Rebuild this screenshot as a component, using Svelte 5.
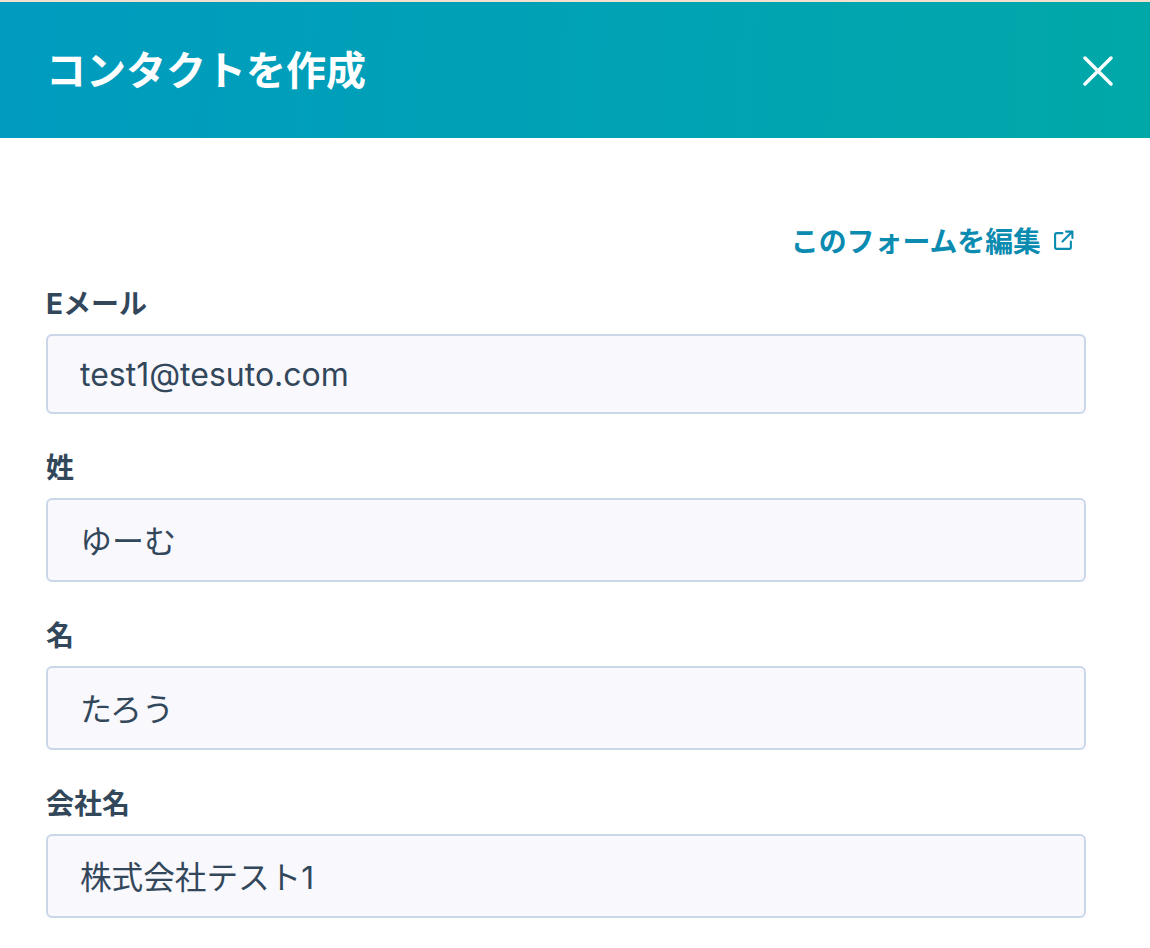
<script>
  const fields = [
    { label: 'Eメール', value: 'test1@tesuto.com', height: 80, size: 'large' },
    { label: '姓', value: 'ゆーむ', height: 84, size: 'large' },
    { label: '名', value: 'たろう', height: 84, size: 'large' },
    { label: '会社名', value: '株式会社テスト1', height: 84, size: 'normal' }
  ];
</script>

<div class="panel">
  <header class="head">
    <h1>コンタクトを作成</h1>
    <button class="close" aria-label="閉じる">
      <svg width="30" height="30" viewBox="0 0 30 30" fill="none" stroke="#fff" stroke-width="3.4" stroke-linecap="round">
        <path d="M2 2 L28 28 M28 2 L2 28" />
      </svg>
    </button>
  </header>
  <div class="body">
    <div class="edit">
      <span class="edit-text">このフォームを編集</span>
      <svg width="21" height="21" viewBox="0 0 20 20" fill="none" stroke="#0b8bb0" stroke-width="2" stroke-linecap="round" stroke-linejoin="round">
        <path d="M9 3 H3.5 A1.5 1.5 0 0 0 2 4.5 V16.5 A1.5 1.5 0 0 0 3.5 18 H15.5 A1.5 1.5 0 0 0 17 16.5 V11" />
        <path d="M9 11 L18.5 1.5 M12.5 1.5 H18.5 V7.5" />
      </svg>
    </div>
    {#each fields as f}
      <div class="field">
        <label for={f.label}>{f.label}</label>
        <input id={f.label} class={f.size} value={f.value} style="height:{f.height}px" readonly />
      </div>
    {/each}
  </div>
</div>

<style>
  :global(body) {
    margin: 0;
    background: #fff;
  }
  .panel {
    width: 1150px;
    height: 948px;
    overflow: hidden;
    background: #fff;
    border-top: 2px solid #f5dfcf;
    box-sizing: border-box;
    font-family: Inter, "Noto Sans CJK JP", sans-serif;
    color: #33475b;
  }
  .head {
    height: 136px;
    box-sizing: border-box;
    padding: 0 37px 0 46px;
    display: flex;
    align-items: center;
    justify-content: space-between;
    background: linear-gradient(93deg, #009bbf 0%, #00a3b3 60%, #00a8a8 100%);
  }
  h1 {
    margin: 0 0 -2px;
    font-size: 40px;
    font-weight: 700;
    color: #fff;
    line-height: 1;
  }
  .close {
    padding: 0;
    border: 0;
    background: none;
    display: flex;
    margin-top: 2px;
  }
  .body {
    padding: 86px 64px 0 46px;
  }
  .edit {
    display: flex;
    justify-content: flex-end;
    align-items: center;
    gap: 12px;
    height: 32px;
    padding-right: 12px;
    color: #0b8bb0;
    font-size: 27.9px;
    font-weight: 700;
  }
  .field {
    margin-top: 40px;
  }
  .edit + .field {
    margin-top: 34px;
  }
  .edit + .field input {
    padding-bottom: 0;
  }
  label {
    display: block;
    height: 28px;
    line-height: 28px;
    font-size: 28px;
    font-weight: 700;
    margin-bottom: 16px;
  }
  input {
    display: block;
    width: 100%;
    box-sizing: border-box;
    border: 2px solid #cbd6e9;
    border-radius: 6px;
    background: #f8f8fd;
    padding: 0 32px 2px;
    font: inherit;
    color: #33475b;
    outline: none;
  }
  input.large {
    font-size: 32px;
  }
  input.normal {
    font-size: 31.6px;
  }
</style>
